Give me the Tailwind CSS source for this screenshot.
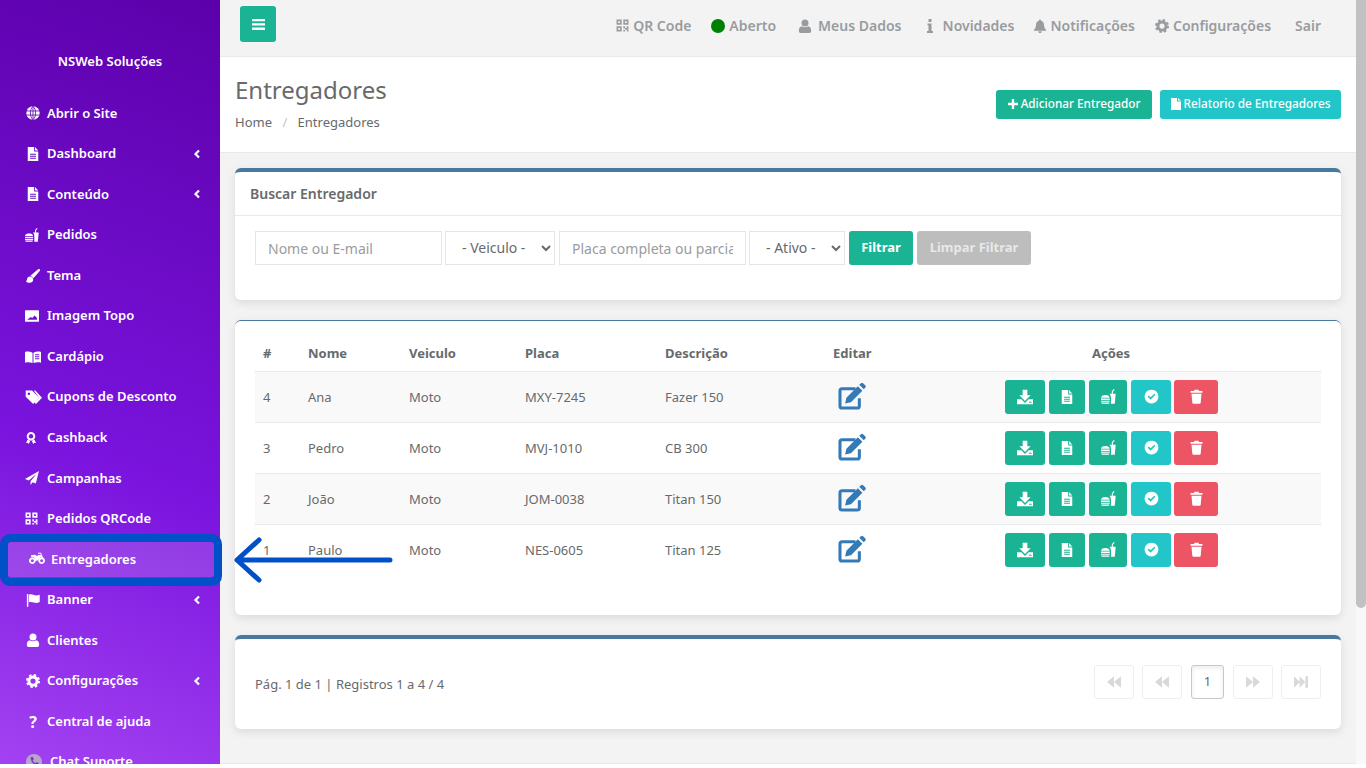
<!DOCTYPE html>
<html lang="pt-BR">
<head>
    <meta charset="UTF-8">
    <meta name="viewport" content="width=device-width, initial-scale=1.0">
    <title>Entregadores</title>
    <script src="https://cdn.jsdelivr.net/npm/@tailwindcss/browser@4"></script>
</head>
<body class="bg-white overflow-hidden font-['Noto_Sans','Open_Sans',sans-serif] text-[13px] text-[#676a6c]">
    <!-- icon sprite -->
    <svg class="hidden">
        <symbol id="i-globe" viewBox="0 0 24 24">
            <circle cx="12" cy="12" r="11.5" fill="currentColor"/>
            <path d="M1 8.500h22M1 15.500h22M12 0.500v23M12 0.500C6 6 6 18 12 23.500M12 0.500C18 6 18 18 12 23.500" fill="none" stroke="#5f00b2" stroke-width="1.400"/>
        </symbol>
        <symbol id="i-file" viewBox="0 0 24 24">
            <path fill-rule="evenodd" fill="currentColor" d="M3 0h11v7.500h7V24H3zM15.500 0l5.500 6h-5.500zM7 11.500v1.800h10v-1.800zM7 15v1.800h10v-1.800zM7 18.500v1.800h10v-1.800z"/>
        </symbol>
        <symbol id="i-food" viewBox="0 0 24 24">
            <path fill="currentColor" d="M0 14C.5 10.500 4 9.500 7 9.500s6.500 1 7 4.500zM0 15.300h14v2.200H0zM0 18.700h14v1.800H0zM.5 21.500h13v.3c0 1-.8 1.700-1.800 1.700H2.300c-1 0-1.800-.7-1.800-1.700zM13.500 7.500h3.800V3.500L20.500 0l1.300 1L19 4.200v3.300h4.500L22 23.500h-6.300c.2-.7.3-1.200.3-1.800V14c0-2.500-1-5-2.500-6.500z"/>
        </symbol>
        <symbol id="i-brush" viewBox="0 0 24 24">
            <path fill="currentColor" d="M23.500.5c-.9-.9-2.300-.6-3.300.3L7.500 11.500c2.200.6 4 2.500 4.700 4.800L23.200 4c.9-1.100 1.200-2.600.3-3.500zM7 12.800c-3.200 0-4.800 2-5.100 4.600C1.700 19.200 1 20.200-.2 20.500c1.500 2.500 4.500 3.500 7.500 3 3.800-.7 5.500-3.500 4.800-6.500-.6-2.500-2.800-4.200-5.100-4.200z"/>
        </symbol>
        <symbol id="i-image" viewBox="0 0 24 24">
            <path fill-rule="evenodd" fill="currentColor" d="M1.500 2h21A1.500 1.500 0 0 1 24 3.500v17a1.500 1.500 0 0 1-1.500 1.500h-21A1.500 1.500 0 0 1 0 20.500v-17A1.500 1.500 0 0 1 1.500 2zM3.500 18.500h17v-3l-4-4.500-4 4.500-2.500-2z"/>
        </symbol>
        <symbol id="i-book" viewBox="0 0 24 24">
            <path fill-rule="evenodd" fill="currentColor" d="M0 4.500C3 3.500 7.500 3.500 11.300 5.500V21C7.500 19.500 3 19.500 0 20.500zM24 4.500C21 3.500 16.500 3.500 12.700 5.500V21c3.800-1.500 8.300-1.500 11.300-.5zM15 8v1.200h6.500V8zM15 11v1.200h6.500V11zM15 14v1.200h6.500V14z"/>
        </symbol>
        <symbol id="i-tags" viewBox="0 0 24 24">
            <path fill-rule="evenodd" fill="currentColor" d="M1 2h9l10 10.500-8.500 8.500L1 11zM5.500 5a1.800 1.800 0 1 0 .01 0z"/>
            <path fill="currentColor" d="M12.500 2h2l9.500 10.500-8.500 8.500-2.200-2.200 6.500-6.300z"/>
        </symbol>
        <symbol id="i-award" viewBox="0 0 24 24">
            <path fill-rule="evenodd" fill="currentColor" d="M12 0a8.500 8.500 0 1 1-.01 0zM12 4a4.500 4.500 0 1 0 .01 0z"/>
            <path fill="currentColor" d="M5 15.500 2 22l3.500-.5L7.500 24l3-6.500zM19 15.500 22 22l-3.500-.5-2 2.500-3-6.500z"/>
        </symbol>
        <symbol id="i-plane" viewBox="0 0 24 24">
            <path fill="currentColor" d="M24 0 0 13.500l6.500 2.700L20 4.500 9.500 17.500V24l3.800-4.700 5.200 2.200z"/>
        </symbol>
        <symbol id="i-qr" viewBox="0 0 24 24">
            <path fill-rule="evenodd" fill="currentColor" d="M1 1h9.500v9.500H1zM4 4v3.500h3.500V4zM13.500 1H23v9.500h-9.500zM16.500 4v3.500H20V4zM1 13.500h9.500V23H1zM4 16.500V20h3.500v-3.500zM13.500 13.500h3.200v3h3v-3H23v6.200h-6.300v-2h-3.200zM13.500 20.500h3.200V23h-3.200zM20 20.500h3V23h-3z"/>
        </symbol>
        <symbol id="i-moto" viewBox="0 0 24 24">
            <path fill-rule="evenodd" fill="currentColor" d="M5 9.500a5 5 0 1 1-.01 0zM5 12.300a2.200 2.200 0 1 0 .01 0zM19 9.500a5 5 0 1 1-.01 0zM19 12.300a2.200 2.200 0 1 0 .01 0z"/>
            <path fill="currentColor" d="M3 6.500l6-.7 3 1.700 2.500-1.500H18L17 4h-3.500V2.500h4.600l2.400 6 1.500 2.300-2 .9-1.800-2.700-5.700 5.500h-3C9.800 11.500 8 9 3 8.800z"/>
        </symbol>
        <symbol id="i-flag" viewBox="0 0 24 24">
            <path fill="currentColor" d="M1.500 1.500h2.500v22H1.500zM5 3c3-1.500 6-.5 8.500.5 3 1 6 1 10-.5v12.500c-4 1.800-7 1.800-10 .8C11 15.500 8 14.500 5 16z"/>
        </symbol>
        <symbol id="i-user" viewBox="0 0 24 24">
            <circle cx="12" cy="6.800" r="6" fill="currentColor"/>
            <path fill="currentColor" d="M6.500 12.500c3 2 8 2 11 0 3 .5 5 3 5 6.500v2c0 1.700-1.300 3-3 3h-15c-1.700 0-3-1.300-3-3v-2c0-3.500 2-6 5-6.500z"/>
        </symbol>
        <symbol id="i-cog" viewBox="0 0 24 24">
            <circle cx="12" cy="12" r="7" fill="none" stroke="currentColor" stroke-width="5"/>
            <circle cx="12" cy="12" r="10" fill="none" stroke="currentColor" stroke-width="4" stroke-dasharray="4.100 3.750"/>
        </symbol>
        <symbol id="i-bell" viewBox="0 0 24 24">
            <path fill="currentColor" d="M12 1a1.700 1.700 0 0 1 1.700 1.900C17.500 3.700 19 7 19 10.500c0 4 1.500 6 3.500 8v1.500h-21v-1.500c2-2 3.500-4 3.500-8 0-3.500 1.500-6.800 5.300-7.600A1.700 1.700 0 0 1 12 1zM9 21.200h6a3 3 0 0 1-6 0z"/>
        </symbol>
        <symbol id="i-edit" viewBox="0 0 24 24">
            <path fill="none" stroke="currentColor" stroke-width="2.600" stroke-linejoin="round" d="M15 5.700H3.500a1.800 1.800 0 0 0-1.800 1.800v13a1.800 1.800 0 0 0 1.800 1.800h13a1.800 1.800 0 0 0 1.800-1.800V14"/>
            <path fill="currentColor" d="M19.500 1.200c.7-.7 1.500-.7 2.200 0l1.600 1.600c.7.700.7 1.500 0 2.200l-1.200 1.300-3.900-3.900zM17 3.700l3.900 3.900-9.800 9.800-5 1.100 1.100-5z"/>
        </symbol>
        <symbol id="i-download" viewBox="0 0 24 24">
            <path fill="currentColor" d="M8.500 1h7v8.500h5L12 18 3.500 9.500h5z"/>
            <path fill-rule="evenodd" fill="currentColor" d="M0 15.500h6.500L12 21l5.500-5.500H24V23H0zM18 19v1.500h4V19z"/>
        </symbol>
        <symbol id="i-check" viewBox="0 0 24 24">
            <path fill-rule="evenodd" fill="currentColor" d="M12 1a11 11 0 1 1-.01 0zM10.500 13.200 7.700 10.500 5.800 12.400l4.700 4.700 7.800-7.800-1.900-1.900z"/>
        </symbol>
        <symbol id="i-trash" viewBox="0 0 24 24">
            <path fill="currentColor" d="M9 1h6l1 2h5.500v3h-19V3H8zM4 7.500h16L18.700 22c-.1 1-.8 1.500-1.700 1.500H7c-.9 0-1.600-.5-1.700-1.500z"/>
        </symbol>
        <symbol id="i-back2" viewBox="0 0 24 24">
            <path fill="currentColor" d="M12 2v20L0 12zM24 2v20L12 12z"/>
        </symbol>
        <symbol id="i-fwd2" viewBox="0 0 24 24">
            <path fill="currentColor" d="M0 2v20l12-10zM12 2v20l12-10z"/>
        </symbol>
        <symbol id="i-end" viewBox="0 0 24 24">
            <path fill="currentColor" d="M0 2v20l10-10zM9.500 2v20l10-10zM19.500 2H24v20h-4.500z"/>
        </symbol>
    </svg>

    <div class="flex h-[764px] overflow-hidden">
        <!-- sidebar -->
        <aside class="w-[220px] shrink-0 h-full overflow-hidden bg-[linear-gradient(20deg,#a342f2_0%,#7a14de_40%,#5c00aa_100%)] text-white font-semibold">
            <div class="h-[93.100px] pt-[51px] text-center leading-5">NSWeb Soluções</div>
            <nav class="flex flex-col">
                <a class="h-[40.550px] flex items-center pl-[26px] pr-[19px]"><svg class="w-[14px] h-[14px] mr-[7px]"><use href="#i-globe"/></svg>Abrir o Site</a>
                <a class="h-[40.550px] flex items-center pl-[26px] pr-[19px]"><svg class="w-[14px] h-[14px] mr-[7px]"><use href="#i-file"/></svg>Dashboard<svg class="ml-auto w-2 h-[10px]" viewBox="0 0 8 10"><path d="M6 1.500 2.500 5 6 8.500" fill="none" stroke="currentColor" stroke-width="2.200"/></svg></a>
                <a class="h-[40.550px] flex items-center pl-[26px] pr-[19px]"><svg class="w-[14px] h-[14px] mr-[7px]"><use href="#i-file"/></svg>Conteúdo<svg class="ml-auto w-2 h-[10px]" viewBox="0 0 8 10"><path d="M6 1.500 2.500 5 6 8.500" fill="none" stroke="currentColor" stroke-width="2.200"/></svg></a>
                <a class="h-[40.550px] flex items-center pl-[25px] pr-[19px]"><svg class="w-[14px] h-[14px] mr-[8px]"><use href="#i-food"/></svg>Pedidos</a>
                <a class="h-[40.550px] flex items-center pl-[26px] pr-[19px]"><svg class="w-[14px] h-[14px] mr-[7px]"><use href="#i-brush"/></svg>Tema</a>
                <a class="h-[40.550px] flex items-center pl-[25px] pr-[19px]"><svg class="w-[14px] h-[14px] mr-[8px]"><use href="#i-image"/></svg>Imagem Topo</a>
                <a class="h-[40.550px] flex items-center pl-[25px] pr-[19px]"><svg class="w-[16px] h-[16px] mr-[6px]"><use href="#i-book"/></svg>Cardápio</a>
                <a class="h-[40.550px] flex items-center pl-[25px] pr-[19px]"><svg class="w-[17px] h-[17px] mr-[5px]"><use href="#i-tags"/></svg>Cupons de Desconto</a>
                <a class="h-[40.550px] flex items-center pl-[25px] pr-[19px]"><svg class="w-[12px] h-[12px] mr-[10px]"><use href="#i-award"/></svg>Cashback</a>
                <a class="h-[40.550px] flex items-center pl-[25px] pr-[19px]"><svg class="w-[14px] h-[14px] mr-[8px]"><use href="#i-plane"/></svg>Campanhas</a>
                <a class="h-[40.550px] flex items-center pl-[25px] pr-[19px]"><svg class="w-[13px] h-[13px] mr-[9px]"><use href="#i-qr"/></svg>Pedidos QRCode</a>
                <div class="h-[40.550px] flex items-center pl-2 pr-[6px]">
                    <a class="w-full h-[35px] flex items-center pl-[21px] rounded-[3px] bg-white/15"><svg class="w-[16px] h-[16px] mr-[6px]"><use href="#i-moto"/></svg>Entregadores</a>
                </div>
                <a class="h-[40.550px] flex items-center pl-[26px] pr-[19px]"><svg class="w-[14px] h-[14px] mr-[7px]"><use href="#i-flag"/></svg>Banner<svg class="ml-auto w-2 h-[10px]" viewBox="0 0 8 10"><path d="M6 1.500 2.500 5 6 8.500" fill="none" stroke="currentColor" stroke-width="2.200"/></svg></a>
                <a class="h-[40.550px] flex items-center pl-[26px] pr-[19px]"><svg class="w-[14px] h-[14px] mr-[7px]"><use href="#i-user"/></svg>Clientes</a>
                <a class="h-[40.550px] flex items-center pl-[26px] pr-[19px]"><svg class="w-[14px] h-[14px] mr-[7px]"><use href="#i-cog"/></svg>Configurações<svg class="ml-auto w-2 h-[10px]" viewBox="0 0 8 10"><path d="M6 1.500 2.500 5 6 8.500" fill="none" stroke="currentColor" stroke-width="2.200"/></svg></a>
                <a class="h-[40.550px] flex items-center pl-[26px] pr-[19px]"><span class="w-[14px] mr-[7px] text-center text-[16px] font-bold leading-none">?</span>Central de ajuda</a>
                <a class="h-[40.550px] flex items-center pl-[26px] pr-[19px]"><svg class="w-[16px] h-[16px] mr-[8px]" viewBox="0 0 24 24"><circle cx="12" cy="12" r="12" fill="#b7a4cf"/><path fill="#7d3ab8" d="M7 5l3-1 2 4-2 1.500c.8 2 2.200 3.500 4 4.500l1.500-2 4 2-1 3c-6 1.500-12-6-11.500-12z"/></svg>Chat Suporte</a>
            </nav>
        </aside>

        <!-- main -->
        <div class="flex-1 min-w-0 flex flex-col bg-[#f3f3f4] border-b border-[#e7e7e7]">
            <header class="h-[57px] shrink-0 flex items-center pl-5 pr-[35px] border-b border-[#e7eaec] font-semibold text-[14px] text-[#999c9e]">
                <button class="w-9 h-9 mb-[8px] flex items-center justify-center rounded-[3px] bg-[#1ab394] text-white">
                    <svg class="w-[13px] h-[11px]" viewBox="0 0 13 11"><path d="M0 0h13v2.300H0zM0 4.300h13v2.300H0zM0 8.600h13V11H0z" fill="currentColor"/></svg>
                </button>
                <nav class="ml-auto mb-[5px] flex items-center">
                    <a class="flex items-center"><svg class="w-[13px] h-[13px] mr-1"><use href="#i-qr"/></svg>QR Code</a>
                    <a class="flex items-center ml-5"><span class="w-[14px] h-[14px] rounded-full bg-[#008000] mr-1"></span>Aberto</a>
                    <a class="flex items-center ml-[22px]"><svg class="w-[14px] h-[14px] mr-[6px]"><use href="#i-user"/></svg>Meus Dados</a>
                    <a class="flex items-center ml-[25px]"><svg class="w-[6px] h-[14px] mr-[10px]" viewBox="0 0 6 14"><path fill="currentColor" d="M1.500 0h3v3h-3zM.5 4.500h4V12h1.500v2H0v-2h1.500V6.500h-1z"/></svg>Novidades</a>
                    <a class="flex items-center ml-[19px]"><svg class="w-[14px] h-[14px] mr-[3px]"><use href="#i-bell"/></svg>Notificações</a>
                    <a class="flex items-center ml-5"><svg class="w-[14px] h-[14px] mr-1"><use href="#i-cog"/></svg>Configurações</a>
                    <a class="ml-6">Sair</a>
                </nav>
            </header>

            <section class="h-[96px] shrink-0 flex justify-between bg-white border-b border-[#e7eaec] pl-[15px] pr-[15px]">
                <div>
                    <h1 class="mt-[16px] text-[24px] leading-[34px] font-normal">Entregadores</h1>
                    <p class="mt-[5px] leading-5">Home <span class="text-[#c5c5c5] mx-[7px]">/</span> Entregadores</p>
                </div>
                <div class="mt-[33px] flex gap-2 text-[11.750px] font-medium text-white">
                    <a class="h-[29px] w-[156px] pb-[2px] flex items-center justify-center rounded-[3px] bg-[#1ab394]"><svg class="w-[10px] h-[10px] mr-[3px]" viewBox="0 0 10 10"><path fill="currentColor" d="M3.800 0h2.400v3.800H10v2.400H6.200V10H3.800V6.200H0V3.800h3.800z"/></svg>Adicionar Entregador</a>
                    <a class="h-[29px] w-[181px] pb-[2px] flex items-center justify-center rounded-[3px] bg-[#23c6c8]"><svg class="w-[10px] h-[12px] mr-[3px]" viewBox="0 0 10 12"><path fill="currentColor" d="M0 0h6v3.500h4V12H0zM7 0l3 2.600H7z"/></svg>Relatorio de Entregadores</a>
                </div>
            </section>

            <div class="flex flex-col gap-5 pt-[15px] px-[15px]">
                <!-- filtro -->
                <div class="h-[132px] bg-white rounded-md border-t-4 border-[#47799f] shadow-[0_3px_10px_rgba(0,0,0,0.1)]">
                    <h2 class="h-[44px] flex items-center px-[15px] border-b border-[#e7eaec] text-[14px] font-semibold">Buscar Entregador</h2>
                    <form class="flex items-center mt-[15px] ml-5 text-[14px]">
                        <input class="w-[187px] h-[34px] px-[12px] border border-[#e5e6e7] placeholder:text-[#999c9e]" placeholder="Nome ou E-mail">
                        <select class="w-[110px] h-[34px] ml-[3px] pl-3 pb-[2px] bg-white border border-[#e5e6e7] text-[#676a6c]"><option>- Veiculo -</option></select>
                        <input class="w-[187px] h-[34px] ml-1 px-[12px] border border-[#e5e6e7] placeholder:text-[#999c9e]" placeholder="Placa completa ou parcial">
                        <select class="w-[96px] h-[34px] ml-[3px] pl-3 pb-[2px] bg-white border border-[#e5e6e7] text-[#676a6c]"><option>- Ativo -</option></select>
                        <button type="button" class="w-[64px] h-[34px] ml-1 rounded-[3px] bg-[#1ab394] text-white text-[13px] font-bold">Filtrar</button>
                        <button type="button" class="w-[114px] h-[34px] ml-1 rounded-[3px] bg-[#bdbdbd] text-[#e8e8e8] text-[13px] font-bold">Limpar Filtrar</button>
                    </form>
                </div>

                <!-- tabela -->
                <div class="h-[295px] bg-white rounded-md border-t border-[#47799f] shadow-[0_3px_10px_rgba(0,0,0,0.1)] px-5 pt-[14px]">
                    <table class="w-full table-fixed border-collapse">
                        <thead>
                            <tr class="h-[36px] text-left [&>th]:pt-[2px]">
                                <th class="w-[45px] pl-2 font-bold">#</th>
                                <th class="w-[101px] pl-2 font-bold">Nome</th>
                                <th class="w-[116px] pl-2 font-bold">Veiculo</th>
                                <th class="w-[140px] pl-2 font-bold">Placa</th>
                                <th class="w-[168px] pl-2 font-bold">Descrição</th>
                                <th class="w-[76px] pl-2 font-bold">Editar</th>
                                <th class="text-center font-bold">Ações</th>
                            </tr>
                        </thead>
                        <tbody>
                            <tr class="h-[51px] bg-[#f9f9f9] border-t border-[#e7eaec] [&>td:nth-child(-n+6)]:pt-[2px]">
                                <td class="pl-2">4</td><td class="pl-2">Ana</td><td class="pl-2">Moto</td><td class="pl-2">MXY-7245</td><td class="pl-2">Fazer 150</td>
                                <td class="pl-[13px]"><svg class="w-[28px] h-[28px] text-[#337ab7] mb-[3px]"><use href="#i-edit"/></svg></td>
                                <td><div class="flex justify-center gap-1 pl-px text-white">
                                    <a class="w-10 h-[34px] flex items-center justify-center rounded-[3px] bg-[#1ab394]"><svg class="w-4 h-4"><use href="#i-download"/></svg></a>
                                    <a class="w-9 h-[34px] flex items-center justify-center rounded-[3px] bg-[#1ab394]"><svg class="w-[14px] h-[14px]"><use href="#i-file"/></svg></a>
                                    <a class="w-[38px] h-[34px] flex items-center justify-center rounded-[3px] bg-[#1ab394]"><svg class="w-[15px] h-[15px]"><use href="#i-food"/></svg></a>
                                    <a class="w-10 h-[34px] flex items-center justify-center rounded-[3px] bg-[#23c6c8]"><svg class="w-[15px] h-[15px]"><use href="#i-check"/></svg></a>
                                    <a class="w-11 h-[34px] -ml-px flex items-center justify-center rounded-[3px] bg-[#ed5565]"><svg class="w-[15px] h-[15px]"><use href="#i-trash"/></svg></a>
                                </div></td>
                            </tr>
                            <tr class="h-[51px] border-t border-[#e7eaec] [&>td:nth-child(-n+6)]:pt-[2px]">
                                <td class="pl-2">3</td><td class="pl-2">Pedro</td><td class="pl-2">Moto</td><td class="pl-2">MVJ-1010</td><td class="pl-2">CB 300</td>
                                <td class="pl-[13px]"><svg class="w-[28px] h-[28px] text-[#337ab7] mb-[3px]"><use href="#i-edit"/></svg></td>
                                <td><div class="flex justify-center gap-1 pl-px text-white">
                                    <a class="w-10 h-[34px] flex items-center justify-center rounded-[3px] bg-[#1ab394]"><svg class="w-4 h-4"><use href="#i-download"/></svg></a>
                                    <a class="w-9 h-[34px] flex items-center justify-center rounded-[3px] bg-[#1ab394]"><svg class="w-[14px] h-[14px]"><use href="#i-file"/></svg></a>
                                    <a class="w-[38px] h-[34px] flex items-center justify-center rounded-[3px] bg-[#1ab394]"><svg class="w-[15px] h-[15px]"><use href="#i-food"/></svg></a>
                                    <a class="w-10 h-[34px] flex items-center justify-center rounded-[3px] bg-[#23c6c8]"><svg class="w-[15px] h-[15px]"><use href="#i-check"/></svg></a>
                                    <a class="w-11 h-[34px] -ml-px flex items-center justify-center rounded-[3px] bg-[#ed5565]"><svg class="w-[15px] h-[15px]"><use href="#i-trash"/></svg></a>
                                </div></td>
                            </tr>
                            <tr class="h-[51px] bg-[#f9f9f9] border-t border-[#e7eaec] [&>td:nth-child(-n+6)]:pt-[2px]">
                                <td class="pl-2">2</td><td class="pl-2">João</td><td class="pl-2">Moto</td><td class="pl-2">JOM-0038</td><td class="pl-2">Titan 150</td>
                                <td class="pl-[13px]"><svg class="w-[28px] h-[28px] text-[#337ab7] mb-[3px]"><use href="#i-edit"/></svg></td>
                                <td><div class="flex justify-center gap-1 pl-px text-white">
                                    <a class="w-10 h-[34px] flex items-center justify-center rounded-[3px] bg-[#1ab394]"><svg class="w-4 h-4"><use href="#i-download"/></svg></a>
                                    <a class="w-9 h-[34px] flex items-center justify-center rounded-[3px] bg-[#1ab394]"><svg class="w-[14px] h-[14px]"><use href="#i-file"/></svg></a>
                                    <a class="w-[38px] h-[34px] flex items-center justify-center rounded-[3px] bg-[#1ab394]"><svg class="w-[15px] h-[15px]"><use href="#i-food"/></svg></a>
                                    <a class="w-10 h-[34px] flex items-center justify-center rounded-[3px] bg-[#23c6c8]"><svg class="w-[15px] h-[15px]"><use href="#i-check"/></svg></a>
                                    <a class="w-11 h-[34px] -ml-px flex items-center justify-center rounded-[3px] bg-[#ed5565]"><svg class="w-[15px] h-[15px]"><use href="#i-trash"/></svg></a>
                                </div></td>
                            </tr>
                            <tr class="h-[51px] border-t border-[#e7eaec] [&>td:nth-child(-n+6)]:pt-[2px]">
                                <td class="pl-2">1</td><td class="pl-2">Paulo</td><td class="pl-2">Moto</td><td class="pl-2">NES-0605</td><td class="pl-2">Titan 125</td>
                                <td class="pl-[13px]"><svg class="w-[28px] h-[28px] text-[#337ab7] mb-[3px]"><use href="#i-edit"/></svg></td>
                                <td><div class="flex justify-center gap-1 pl-px text-white">
                                    <a class="w-10 h-[34px] flex items-center justify-center rounded-[3px] bg-[#1ab394]"><svg class="w-4 h-4"><use href="#i-download"/></svg></a>
                                    <a class="w-9 h-[34px] flex items-center justify-center rounded-[3px] bg-[#1ab394]"><svg class="w-[14px] h-[14px]"><use href="#i-file"/></svg></a>
                                    <a class="w-[38px] h-[34px] flex items-center justify-center rounded-[3px] bg-[#1ab394]"><svg class="w-[15px] h-[15px]"><use href="#i-food"/></svg></a>
                                    <a class="w-10 h-[34px] flex items-center justify-center rounded-[3px] bg-[#23c6c8]"><svg class="w-[15px] h-[15px]"><use href="#i-check"/></svg></a>
                                    <a class="w-11 h-[34px] -ml-px flex items-center justify-center rounded-[3px] bg-[#ed5565]"><svg class="w-[15px] h-[15px]"><use href="#i-trash"/></svg></a>
                                </div></td>
                            </tr>
                        </tbody>
                    </table>
                </div>

                <!-- paginacao -->
                <div class="h-[94px] flex items-center justify-between bg-white rounded-md border-t-4 border-[#47799f] shadow-[0_3px_10px_rgba(0,0,0,0.1)] px-5">
                    <p class="mt-[2px]">Pág. 1 de 1 | Registros 1 a 4 / 4</p>
                    <div class="flex gap-2 -mt-[4px] text-[#d9d9d9]">
                        <a class="w-10 h-[34px] flex items-center justify-center rounded-[3px] border border-[#eeeeee]"><svg class="w-[14px] h-[14px]"><use href="#i-back2"/></svg></a>
                        <a class="w-10 h-[34px] flex items-center justify-center rounded-[3px] border border-[#eeeeee]"><svg class="w-[14px] h-[14px]"><use href="#i-back2"/></svg></a>
                        <a class="w-[33px] h-[34px] mx-px flex items-center justify-center rounded-[3px] border border-[#c8c8c8] shadow-[inset_0_2px_5px_rgba(0,0,0,0.08)] text-[#676a6c]">1</a>
                        <a class="w-10 h-[34px] flex items-center justify-center rounded-[3px] border border-[#eeeeee]"><svg class="w-[14px] h-[14px]"><use href="#i-fwd2"/></svg></a>
                        <a class="w-10 h-[34px] flex items-center justify-center rounded-[3px] border border-[#eeeeee]"><svg class="w-[16px] h-[14px]"><use href="#i-end"/></svg></a>
                    </div>
                </div>
            </div>
        </div>

        <!-- scrollbar -->
        <div class="w-[10px] shrink-0 bg-[#f8f8f8]">
            <div class="h-[608px] rounded-b-md bg-[#c1c1c1]"></div>
        </div>
    </div>

    <!-- destaque do tutorial -->
    <div class="absolute left-0 top-[534px] w-[222px] h-[52px] rounded-[10px] border-[8px] border-[#0050c8]"></div>
    <svg class="absolute left-[232px] top-[537px] w-[162px] h-[46px]" viewBox="0 0 162 46">
        <path d="M158 23H6M27 3 5 23l22 20" fill="none" stroke="#0050c8" stroke-width="5" stroke-linecap="round" stroke-linejoin="round"/>
    </svg>
</body>
</html>
